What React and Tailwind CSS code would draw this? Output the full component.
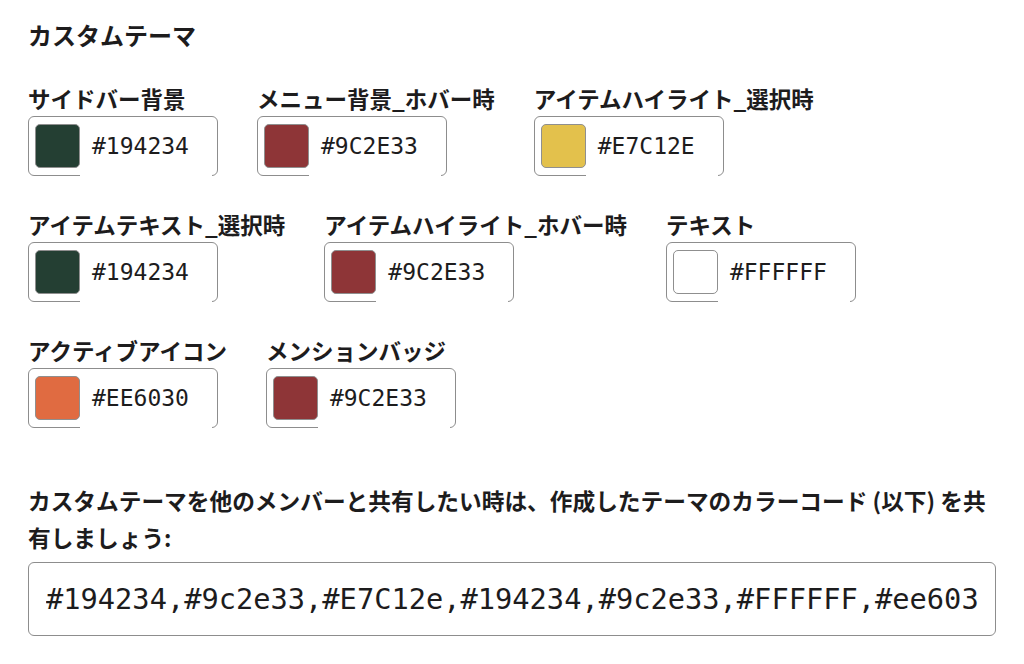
import React from "react";

const COLORS = [
  { label: "サイドバー背景", hex: "#194234", swatch: "#243f33" },
  { label: "メニュー背景_ホバー時", hex: "#9C2E33", swatch: "#8e3537" },
  { label: "アイテムハイライト_選択時", hex: "#E7C12E", swatch: "#e3c14c" },
  { label: "アイテムテキスト_選択時", hex: "#194234", swatch: "#243f33" },
  { label: "アイテムハイライト_ホバー時", hex: "#9C2E33", swatch: "#8e3537" },
  { label: "テキスト", hex: "#FFFFFF", swatch: "#ffffff" },
  { label: "アクティブアイコン", hex: "#EE6030", swatch: "#e06b41" },
  { label: "メンションバッジ", hex: "#9C2E33", swatch: "#8e3537" },
];

function ColorField({ label, hex, swatch }) {
  return (
    <div className="flex flex-col">
      <div className="h-[28px] leading-[28px] text-[22.5px] font-bold whitespace-nowrap">{label}</div>
      <div className="mt-1 w-[190px] h-[60px] flex items-center rounded-md border border-[#8d8d8d] bg-white">
        <div
          className="ml-[6px] w-[45px] h-[44px] shrink-0 rounded-[5px] border-[1.5px] border-[#8f8f8f]"
          style={{ backgroundColor: swatch }}
        />
        {/* text part sits over the bottom border, like the original */}
        <div className="flex-1 self-stretch -mb-px mr-[5px] pl-[12px] flex items-center bg-white">
          <span className="font-['DejaVu_Sans_Mono',monospace] text-[23px] text-[#1d1c1d]">{hex}</span>
        </div>
      </div>
    </div>
  );
}

export default function App() {
  const code = "#194234,#9c2e33,#E7C12e,#194234,#9c2e33,#FFFFFF,#ee6030";

  return (
    <div className="w-[1024px] h-[664px] overflow-hidden bg-white px-[28px] pt-[19px] text-[#1d1c1d] font-['Noto_Sans_CJK_JP',sans-serif]">
      <h2 className="text-[24px] leading-[32px] font-bold">カスタムテーマ</h2>

      <div className="mt-[33px] flex flex-wrap gap-x-[39px] gap-y-[34px]">
        {COLORS.map((c, i) => (
          <ColorField key={i} {...c} />
        ))}
      </div>

      <p className="mt-[54px] text-[22.7px] leading-[37px] font-bold">
        カスタムテーマを他のメンバーと共有したい時は、作成したテーマのカラーコード (以下) を共有しましょう:
      </p>

      <input
        readOnly
        value={code}
        className="mt-[6px] block w-full h-[74px] rounded-md border border-[#8d8d8d] bg-white pl-[17px] pr-[17px] outline-none font-['DejaVu_Sans_Mono',monospace] text-[28.7px] text-[#1d1c1d]"
      />
    </div>
  );
}
